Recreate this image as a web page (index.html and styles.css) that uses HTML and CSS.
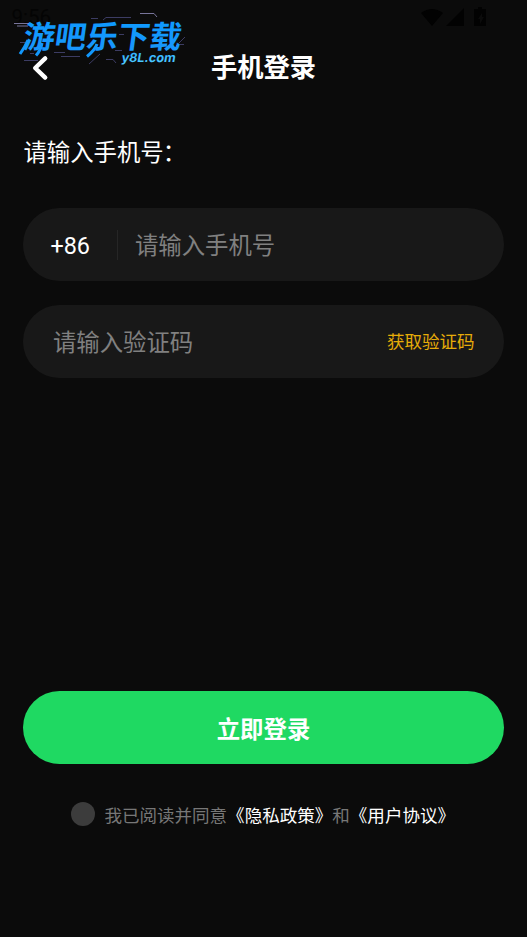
FILE: index.html
```html
<!DOCTYPE html>
<html lang="zh-CN">
<head>
<meta charset="utf-8">
<title>手机登录</title>
<link rel="stylesheet" href="styles.css">
</head>
<body>
<main class="screen">
  <div class="status">
    <span class="clock">9:56</span>
    <svg class="status-icons" width="68" height="22" viewBox="0 0 68 22">
      <path d="M0 5Q11 -3 22 5L11 18Z"/>
      <path d="M43 0V18H25Z"/>
      <path fill-rule="evenodd" d="M57 -1h4v2h4v17H53V1h4zM61 5l-4 6h2v5l4-7h-2z"/>
    </svg>
  </div>
  <header class="nav">
    <svg class="back" width="18" height="28" viewBox="0 0 18 28"><path d="M14.200 4.400L4.200 14L14.200 23.600"/></svg>
    <h1>手机登录</h1>
  </header>
  <svg class="watermark" width="190" height="75" viewBox="0 0 190 75">
    <defs>
      <linearGradient id="blue" x1="0" y1="0" x2="0" y2="1"><stop offset="0" stop-color="#0b9bff"/><stop offset="1" stop-color="#1b95fa"/></linearGradient>
      <linearGradient id="cyan" x1="0" y1="0" x2="0" y2="1"><stop offset="0" stop-color="#2ba8ff"/><stop offset="1" stop-color="#50cfff"/></linearGradient>
    </defs>
    <g class="traces">
      <path d="M91 18.500H98M103 20L106 17.500H131M20 42.500H25M30 53.500H34M24 60.500H38M54 52.500H65M61 56.500H80M89 64L100 54M106 59.500H113L116 63M178 44.500H184M176 46L185 37M119 34.500H124M115 50.500H122"/>
      <path class="bright" d="M14 23.500H30M17 26H28M140 13.500H154L157 17"/>
    </g>
    <path class="tails" d="M28 40Q25 47 20 54M42 43Q41 50 36 55.500M97 44Q95 50 87 56.500"/>
    <text class="brand" x="0" y="0" textLength="158" lengthAdjust="spacingAndGlyphs" transform="translate(22 47.500) skewX(-8)">游吧乐下载</text>
    <text class="site" x="0" y="0" textLength="54" lengthAdjust="spacingAndGlyphs" transform="translate(121 61.500) skewX(-10)">y8L.com</text>
  </svg>
  <form class="login">
    <div class="label">请输入手机号<span class="colon">：</span></div>
    <div class="field phone">
      <span class="code">+86</span>
      <span class="hint">请输入手机号</span>
    </div>
    <div class="field verify">
      <span class="hint">请输入验证码</span>
      <span class="send">获取验证码</span>
    </div>
  </form>
  <div class="submit">立即登录</div>
  <div class="agreement">
    <span class="check"></span>
    <p>我已阅读并同意<b>《隐私政策》</b>和<b>《用户协议》</b></p>
  </div>
</main>
</body>
</html>
```
FILE: styles.css
```css
* { box-sizing: border-box; }
body { margin: 0; background: #0b0b0b; color: #fff; font-family: Roboto, "Noto Sans CJK SC", sans-serif; }
.screen { position: relative; display: flex; flex-direction: column; height: 937px; padding: 0 23.4px; overflow: hidden; }
.status { display: flex; justify-content: space-between; height: 34px; margin: 0 14.5px 0 -12px; padding-top: 8px; color: #040404; }
.clock { font-size: 20.5px; line-height: 19px; }
.status-icons { fill: #020202; overflow: visible; }
.nav { display: grid; grid-template-columns: 60px 1fr 60px; align-items: center; height: 67px; }
.back { margin-left: 7.5px; fill: none; stroke: #fff; stroke-width: 4.4; stroke-linecap: round; stroke-linejoin: round; }
h1 { margin: 0; font-size: 26.3px; line-height: 38px; font-weight: 700; text-align: center; }
.watermark { position: absolute; left: 0; top: 0; }
.traces { fill: none; stroke: #3c3c63; stroke-width: 1; }
.traces .bright { stroke: #77749a; }
.brand { fill: url(#blue); font: 700 31px "Noto Sans CJK SC", sans-serif; }
.tails { fill: none; stroke: #1297fb; stroke-width: 3; }
.site { fill: url(#cyan); font: 700 12.5px Inter, sans-serif; }
.label { margin-top: 34px; font-size: 23.4px; line-height: 36px; }
.colon { margin-left: -1px; }
.field { display: flex; align-items: center; height: 73px; border-radius: 37px; background: #181818; font-size: 23.4px; }
.phone { margin-top: 37px; padding-left: 27px; }
.code { width: 68px; height: 30px; line-height: 32px; border-right: 1.5px solid #262626; }
.phone .hint { margin: 0 0 2px 16.5px; }
.hint { color: #808080; }
.verify { justify-content: space-between; margin-top: 23.5px; padding: 0 29px 0 29.5px; }
.send { margin-bottom: 1px; color: #e6ac08; font-size: 17.55px; }
.submit { height: 73px; margin-top: 313.5px; padding-top: 3px; border-radius: 37px; background: #1fd962; font-size: 23.4px; line-height: 73px; font-weight: 700; text-align: center; }
.agreement { display: flex; align-items: center; margin: 38px 0 0 48px; height: 24px; }
.check { width: 24px; height: 24px; border-radius: 50%; background: #3c3c3c; }
.agreement p { margin: 3px 0 0 9px; color: #777; font-size: 17.55px; line-height: 26px; white-space: nowrap; }
.agreement b { color: #fff; font-weight: 400; }
```
